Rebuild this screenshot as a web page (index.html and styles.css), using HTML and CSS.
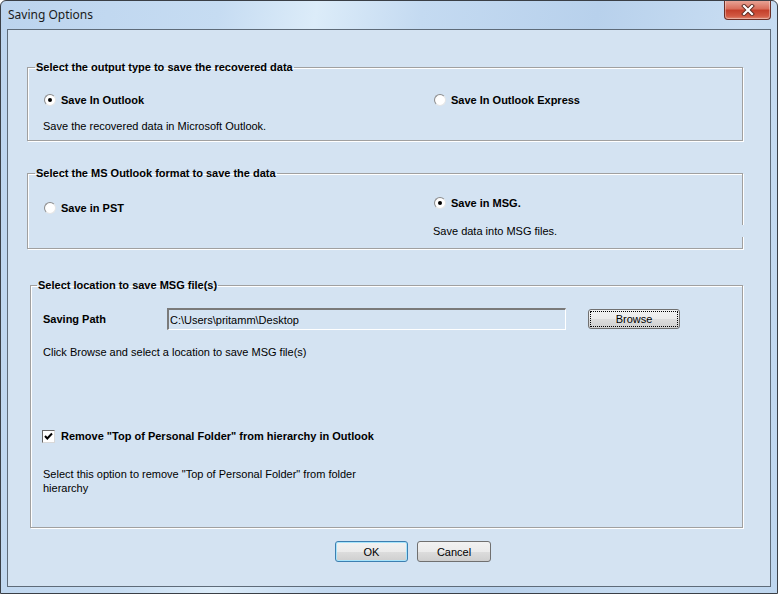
FILE: index.html
```html
<!DOCTYPE html>
<html lang="en">
<head>
    <meta charset="UTF-8">
    <title>Saving Options</title>
    <link rel="stylesheet" href="styles.css">
</head>
<body>
    <div class="window">
        <div class="titlebar">
            <span class="title">Saving Options</span>
            <button class="close-button" title="Close">
                <svg width="14" height="12" viewBox="0 0 14 12">
                    <path d="M3 2 L11 10 M11 2 L3 10" stroke="#5a2a22" stroke-width="4" stroke-linecap="square"/>
                    <path d="M3 2 L11 10 M11 2 L3 10" stroke="#fff" stroke-width="2.2" stroke-linecap="square"/>
                </svg>
            </button>
        </div>

        <div class="client">
            <!-- Output type -->
            <fieldset class="group group-output">
                <legend>Select the output type to save the recovered data</legend>
                <div class="options">
                    <div class="col">
                        <label class="option"><span class="radio checked"></span>Save In Outlook</label>
                        <p class="note">Save the recovered data in Microsoft Outlook.</p>
                    </div>
                    <div class="col">
                        <label class="option"><span class="radio"></span>Save In Outlook Express</label>
                    </div>
                </div>
            </fieldset>

            <!-- Outlook format -->
            <fieldset class="group group-format">
                <legend>Select the MS Outlook format to save the data</legend>
                <div class="options">
                    <div class="col col-pst">
                        <label class="option"><span class="radio"></span>Save in PST</label>
                    </div>
                    <div class="col">
                        <label class="option"><span class="radio checked"></span>Save in MSG.</label>
                        <p class="note note-msg">Save data into MSG files.</p>
                    </div>
                </div>
            </fieldset>

            <!-- Location -->
            <fieldset class="group group-location">
                <legend>Select location to save MSG file(s)</legend>
                <div class="path-row">
                    <span class="path-label">Saving Path</span>
                    <input class="path-input" type="text" value="C:\Users\pritamm\Desktop">
                    <button class="btn btn-focus">Browse</button>
                </div>
                <p class="note">Click Browse and select a location to save MSG file(s)</p>

                <label class="option check-row">
                    <span class="checkbox">
                        <svg width="11" height="11" viewBox="0 0 11 11">
                            <path d="M2 5 L4.3 7.5 L9 2.5" fill="none" stroke="#000" stroke-width="2"/>
                        </svg>
                    </span>
                    Remove "Top of Personal Folder" from hierarchy in Outlook
                </label>
                <p class="note note-wrap">Select this option to remove "Top of Personal Folder" from folder hierarchy</p>
            </fieldset>

            <div class="actions">
                <button class="btn btn-default">OK</button>
                <button class="btn btn-cancel">Cancel</button>
            </div>
        </div>
    </div>
</body>
</html>
```

FILE: styles.css
```css
body {
    margin: 0;
    font-family: "Liberation Sans", Arial, sans-serif;
    font-size: 11px;
    color: #000;
    background: #fff;
}
.window {
    width: 778px;
    height: 594px;
    box-sizing: border-box;
    border: 1px solid #3a3f46;
    border-radius: 6px 6px 0 0;
    background: linear-gradient(100deg, #bcd4ee 0%, #c6dcf2 25%, #dcecf9 36%, #c4daf1 48%, #b8d1ec 68%, #c8ddf2 85%, #bed6ef 100%);
    padding: 0 6px 6px 6px;
    overflow: hidden;
}
.titlebar {
    height: 28px;
    display: flex;
    align-items: flex-start;
}
.title {
    font-family: "Noto Sans", sans-serif;
    font-size: 12px;
    line-height: 14px;
    margin-top: 7px;
    margin-left: 1px;
    color: #1b1b1b;
}
.close-button {
    margin-left: auto;
    margin-top: -1px;
    width: 47px;
    height: 20px;
    border: 1px solid #6b2f26;
    border-top: none;
    border-radius: 0 0 4px 4px;
    background: linear-gradient(#e9a99c 0%, #d9705d 45%, #c4402b 55%, #d25a43 85%, #e08a74 100%);
    display: flex;
    align-items: center;
    justify-content: center;
    padding: 0;
    box-shadow: inset 0 0 0 1px rgba(255, 255, 255, 0.35);
}
.client {
    height: 558px;
    box-sizing: border-box;
    border: 1px solid #5e6b79;
    background: #d4e3f2;
    padding: 30px 27px 0 19px;
}
.group {
    box-sizing: border-box;
    margin: 0;
    padding: 0 0 0 7px;
    border: 1px solid #a0a0a0;
    box-shadow: 1px 1px 0 #fff, inset 1px 1px 0 #fff;
    min-width: 0;
}
.group legend {
    padding: 0 1px;
    font-weight: bold;
    line-height: 14px;
}
.group-output {
    height: 81px;
}
.group-format {
    height: 83px;
    margin-top: 25px;
}
.group-location {
    height: 250px;
    margin: 29px 0 0 3px;
    padding-left: 6px;
}
.options {
    display: grid;
    grid-template-columns: 390px 1fr;
    padding-left: 9px;
}
.group-output .options {
    padding-top: 19px;
}
.group-format .options {
    padding-top: 16px;
}
.col-pst {
    padding-top: 5px;
}
.option {
    display: flex;
    align-items: center;
    gap: 5px;
    font-weight: bold;
    line-height: 14px;
}
.radio {
    width: 12px;
    height: 12px;
    box-sizing: border-box;
    border-radius: 50%;
    border: 1px solid #8c8c8c;
    border-right-color: #e6e6e6;
    border-bottom-color: #e6e6e6;
    background: radial-gradient(circle at 60% 60%, #fff 55%, #ececec 100%);
    position: relative;
}
.radio.checked::after {
    content: "";
    position: absolute;
    left: 3px;
    top: 3px;
    width: 4px;
    height: 4px;
    border-radius: 50%;
    background: #000;
}
.note {
    margin: 12px 0 0 -1px;
    line-height: 14px;
}
.note-msg {
    margin-top: 15px;
    line-height: 12px;
    width: 312px;
    position: relative;
    background: #d4e3f2;
}
.path-row {
    display: flex;
    align-items: center;
    padding: 16px 0 0 6px;
}
.path-label {
    width: 124px;
    font-weight: bold;
}
.path-input {
    width: 399px;
    height: 22px;
    box-sizing: border-box;
    margin: 0;
    padding: 0 1px;
    font: inherit;
    font-size: 11px;
    background: #d4e3f2;
    border: 1px solid #fff;
    border-top: 2px solid #7a7a7a;
    border-left: 2px solid #7a7a7a;
}
.btn {
    font: inherit;
    font-size: 11px;
    height: 21px;
    padding: 0;
    border: 1px solid #707070;
    border-radius: 3px;
    background: linear-gradient(#f2f2f2 0%, #ebebeb 50%, #dddddd 51%, #cfcfcf 100%);
    color: #000;
}
.path-row .btn {
    width: 92px;
    height: 20px;
    margin-left: 22px;
}
.btn-focus {
    outline: 1px dotted #000;
    outline-offset: -3px;
}
.group-location > .note {
    margin: 15px 0 0 6px;
}
.check-row {
    margin: 70px 0 0 5px;
    gap: 6px;
}
.checkbox {
    width: 13px;
    height: 13px;
    box-sizing: border-box;
    border: 1px solid #666;
    border-right-color: #d8d8d8;
    border-bottom-color: #d8d8d8;
    background: #fff;
    display: flex;
    align-items: center;
    justify-content: center;
}
.group-location > .note-wrap {
    margin-top: 24px;
    max-width: 322px;
}
.actions {
    display: flex;
    gap: 9px;
    margin: 13px 0 0 308px;
}
.btn-default {
    width: 73px;
    border-color: #3c7fb1;
    box-shadow: inset 0 0 0 1px #a8e4fb;
}
.btn-cancel {
    width: 74px;
}
```
